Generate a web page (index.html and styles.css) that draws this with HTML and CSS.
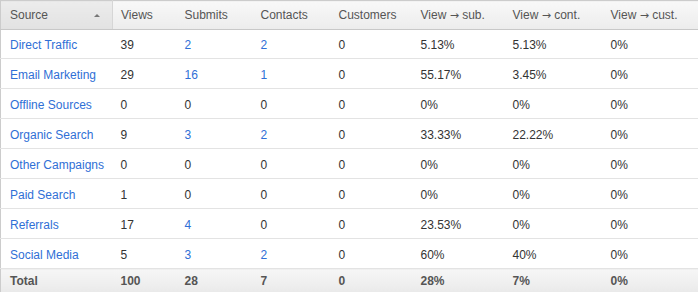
FILE: index.html
```html
<!DOCTYPE html>
<html>
<head>
<meta charset="utf-8">
<link rel="stylesheet" href="styles.css">
</head>
<body>
<table class="report">
  <colgroup>
    <col class="c1"><col class="c2"><col class="c3"><col class="c4"><col class="c5"><col class="c6"><col class="c7"><col class="c8">
  </colgroup>
  <thead>
    <tr>
      <th class="sorted"><span class="th-label">Source</span><span class="caret"></span></th>
      <th>Views</th>
      <th>Submits</th>
      <th>Contacts</th>
      <th>Customers</th>
      <th>View <span class="arrow">&rarr;</span> sub.</th>
      <th>View <span class="arrow">&rarr;</span> cont.</th>
      <th>View <span class="arrow">&rarr;</span> cust.</th>
    </tr>
  </thead>
  <tbody>
    <tr><td><a>Direct Traffic</a></td><td>39</td><td><a>2</a></td><td><a>2</a></td><td>0</td><td>5.13%</td><td>5.13%</td><td>0%</td></tr>
    <tr><td><a>Email Marketing</a></td><td>29</td><td><a>16</a></td><td><a>1</a></td><td>0</td><td>55.17%</td><td>3.45%</td><td>0%</td></tr>
    <tr><td><a>Offline Sources</a></td><td>0</td><td>0</td><td>0</td><td>0</td><td>0%</td><td>0%</td><td>0%</td></tr>
    <tr><td><a>Organic Search</a></td><td>9</td><td><a>3</a></td><td><a>2</a></td><td>0</td><td>33.33%</td><td>22.22%</td><td>0%</td></tr>
    <tr><td><a>Other Campaigns</a></td><td>0</td><td>0</td><td>0</td><td>0</td><td>0%</td><td>0%</td><td>0%</td></tr>
    <tr><td><a>Paid Search</a></td><td>1</td><td>0</td><td>0</td><td>0</td><td>0%</td><td>0%</td><td>0%</td></tr>
    <tr><td><a>Referrals</a></td><td>17</td><td><a>4</a></td><td>0</td><td>0</td><td>23.53%</td><td>0%</td><td>0%</td></tr>
    <tr><td><a>Social Media</a></td><td>5</td><td><a>3</a></td><td><a>2</a></td><td>0</td><td>60%</td><td>40%</td><td>0%</td></tr>
  </tbody>
  <tfoot>
    <tr><td>Total</td><td>100</td><td>28</td><td>7</td><td>0</td><td>28%</td><td>7%</td><td>0%</td></tr>
  </tfoot>
</table>
</body>
</html>
```

FILE: styles.css
```css
html, body {
  margin: 0;
  padding: 0;
  background: #ffffff;
}

.report {
  border-collapse: collapse;
  table-layout: fixed;
  width: 698px;
  font-family: "Liberation Sans", Arial, sans-serif;
  font-size: 12px;
  color: #333333;
  border-top: 1px solid #cccccc;
  border-left: 1px solid #cccccc;
  border-right: 1px solid #cccccc;
}

.c1 { width: 112px; }
.c2 { width: 64px; }
.c3 { width: 76px; }
.c4 { width: 78px; }
.c5 { width: 82px; }
.c6 { width: 92px; }
.c7 { width: 98px; }
.c8 { width: 96px; }

.report th {
  height: 28px;
  padding: 0 8px;
  text-align: left;
  font-weight: normal;
  color: #555555;
  background: linear-gradient(#f8f8f8, #ececec);
  border-bottom: 1px solid #c8c8c8;
  white-space: nowrap;
}

.arrow {
  font-family: "DejaVu Sans", sans-serif;
  font-size: 11px;
  color: #555555;
}

.report th.sorted {
  background: linear-gradient(#ececec, #e2e2e2);
  border-right: 1px solid #d6d6d6;
  padding-left: 9px;
  position: relative;
}

.caret {
  position: absolute;
  right: 12px;
  top: 13px;
  width: 0;
  height: 0;
  border-left: 3px solid transparent;
  border-right: 3px solid transparent;
  border-bottom: 3px solid #777777;
}

.report td {
  height: 27px;
  padding: 2px 8px 0;
  border-bottom: 1px solid #e3e3e3;
  white-space: nowrap;
}

.report tbody tr:first-child td {
  height: 26px;
}

.report td:first-child {
  padding-left: 9px;
}

.report a {
  color: #2f6fd6;
  text-decoration: none;
}

.report tfoot td {
  height: 24px;
  padding-top: 0;
  font-weight: bold;
  color: #555555;
  background: linear-gradient(#f6f6f6, #e9e9e9);
  border-bottom: none;
}
```
